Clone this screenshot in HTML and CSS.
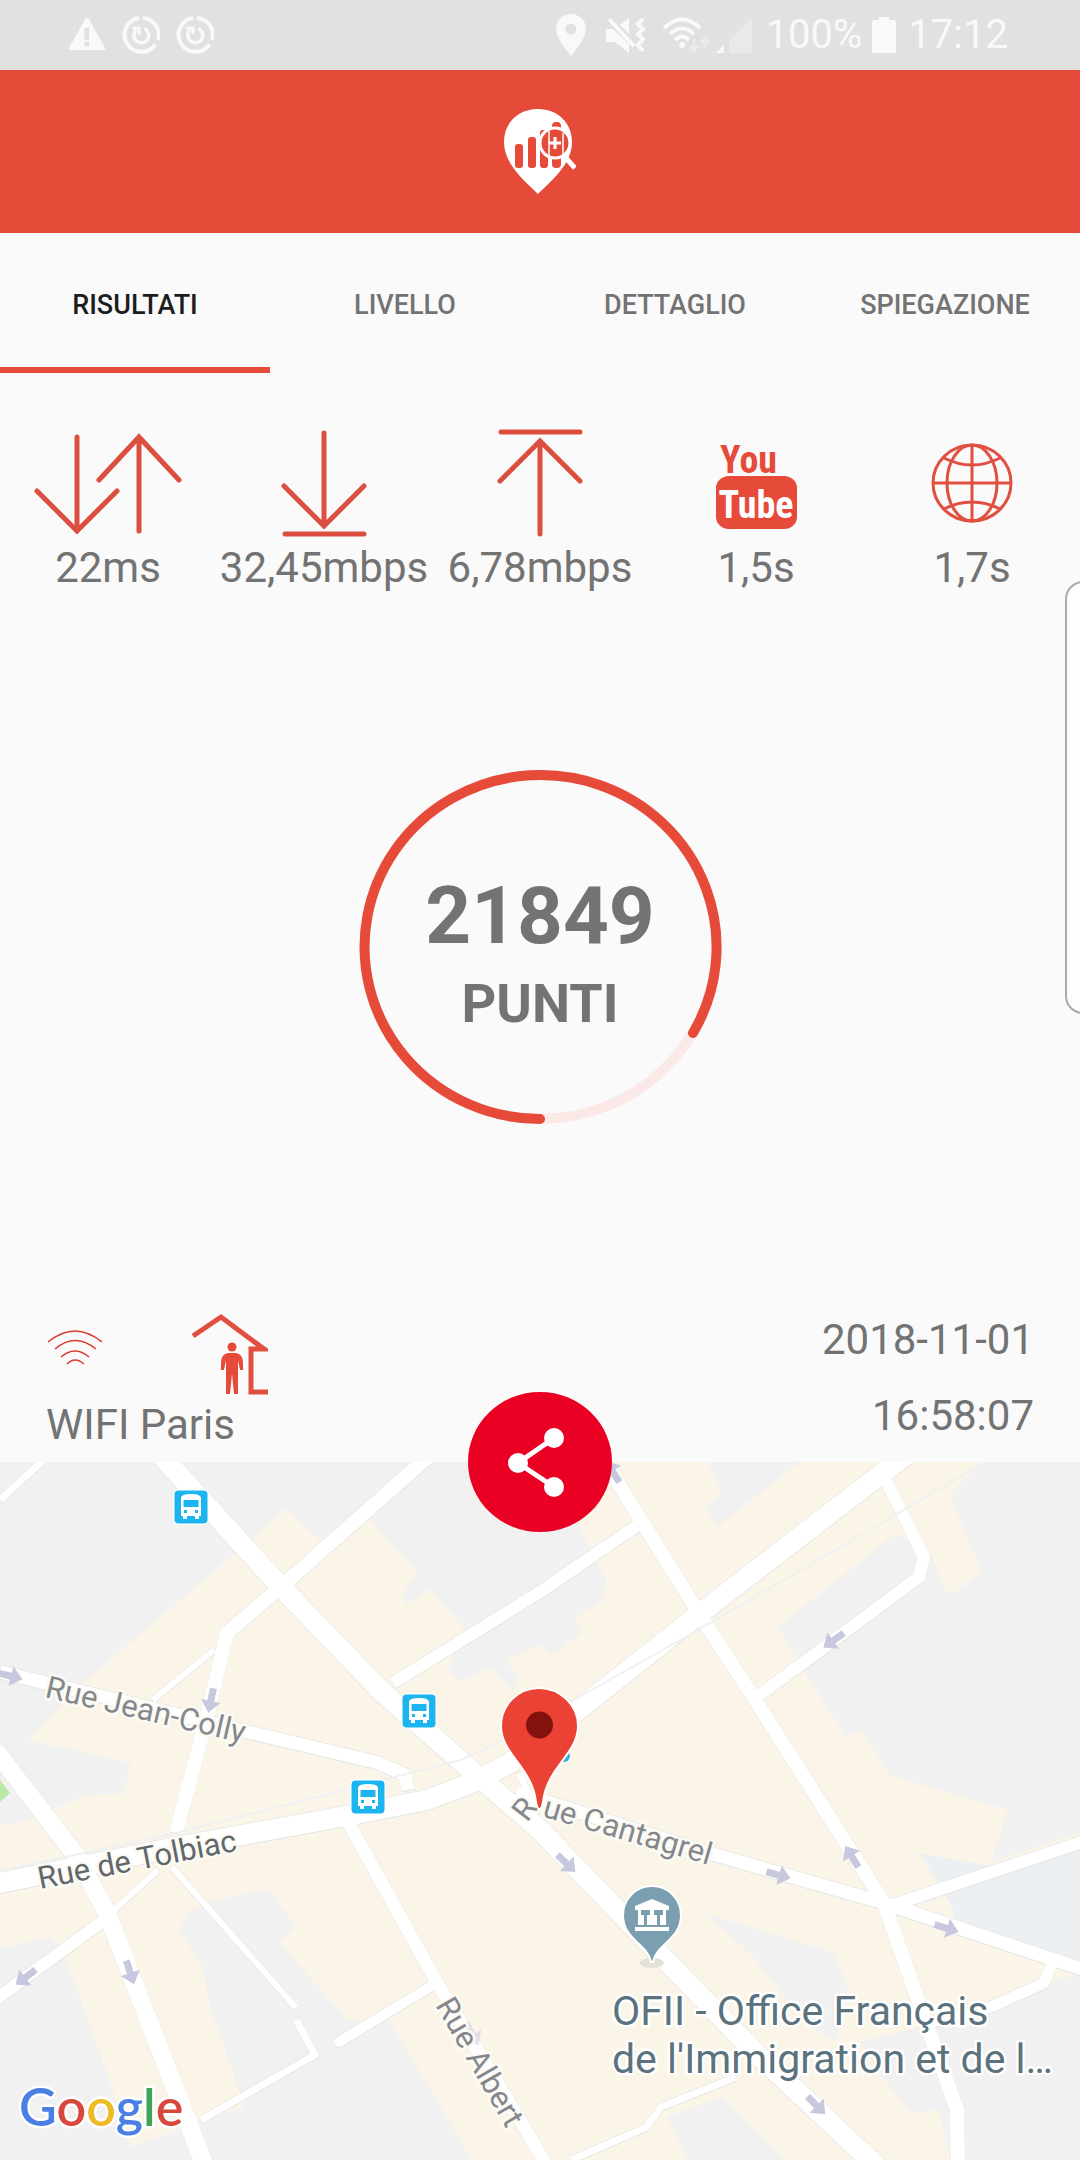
FILE: index.html
```html
<!DOCTYPE html>
<html lang="it">
<head>
<meta charset="utf-8">
<meta name="viewport" content="width=device-width, initial-scale=1">
<title>Risultati</title>
<link rel="stylesheet" href="styles.css">
</head>
<body>
<div class="status">
  <div class="status-group status-left">
    <svg width="38" height="38" viewBox="0 0 38 38"><path fill="#fff" fill-rule="evenodd" d="M19 2q1.500 0 2 1l16 29q.5 2-1 2H2q-1.500 0-1-2L17 3q.5-1 2-1zM16.500 12v12h4.500V12zM16.500 26v4.500h4.500V26z"/></svg>
    <svg width="38" height="38" viewBox="0 0 38 38"><g id="sync" fill="none" stroke="#fff"><path stroke-width="4" d="M17 2A17 17 0 1 0 33.500 28.500M21 2A17 17 0 0 1 36 24"/><path stroke-width="3.500" d="M22.500 12.500A7.500 7.500 0 1 1 14 14"/><path stroke-width="3" d="M10.500 12h6.500v6.500"/></g></svg>
    <svg width="38" height="38" viewBox="0 0 38 38"><use href="#sync"/></svg>
  </div>
  <div class="status-group">
    <svg class="s-pin" width="30" height="42" viewBox="0 0 30 42"><path fill="#fff" fill-rule="evenodd" d="M15 0C6.500 0 0 6.500 0 15c0 10 15 27 15 27s15-17 15-27C30 6.500 23.500 0 15 0zm0 9.500a5.500 5.500 0 1 1 0 11 5.500 5.500 0 0 1 0-11z"/></svg>
    <svg class="s-mute" width="40" height="36" viewBox="0 0 40 36"><path fill="#fff" d="M0 12h7l16 15v9L9 25H0zM14 8l9-7v16z"/><path fill="none" stroke="#fff" stroke-width="4" d="M3 2l25 27M37 2l-5 5 5 5-5 5 5 5-5 6 5 6"/></svg>
    <svg class="s-wifi" width="48" height="36" viewBox="0 0 48 36"><g fill="none" stroke="#fff" stroke-width="4"><path d="M2 11q18-17 36 0M8 17q12-11 24 0M13 23q7-7 14 0"/></g><circle cx="20" cy="28" r="3" fill="#fff"/><path opacity=".45" fill="none" stroke="#fff" stroke-width="3" d="M32 22v12M28 29l4 5 4-5M43 32V21M39 26l4-5 4 5"/></svg>
    <svg class="s-signal" width="36" height="36" viewBox="0 0 36 36"><path fill="#fff" opacity=".35" d="M36 0v36H13V23z"/><path fill="#fff" d="M8 28v8H0z"/></svg>
    <span>100%</span>
    <svg class="s-bat" width="24" height="36" viewBox="0 0 24 36"><path fill="#fff" d="M7 0h10v3h5q2 0 2 2v29q0 2-2 2H2q-2 0-2-2V5q0-2 2-2h5z"/></svg>
    <span>17:12</span>
  </div>
</div>

<header class="appbar">
  <svg width="72" height="86" viewBox="0 0 72 86" role="img" aria-label="Logo">
    <path fill="#fff" d="M34 0C14 0 0 14 0 33c0 22 20 38 34 52C48 71 68 55 68 33 68 14 54 0 34 0z"/>
    <g fill="#e64b3a"><rect x="11" y="35" width="8" height="24" rx="3"/><rect x="24" y="28" width="8" height="31" rx="3"/><rect x="36" y="21" width="8" height="38" rx="3"/><rect x="48" y="13" width="9" height="46" rx="4"/><circle cx="51" cy="34" r="14"/></g>
    <path fill="none" stroke="#fff" stroke-width="1.500" d="M45 22v27M59 24v22"/>
    <circle cx="51" cy="34" r="15" fill="none" stroke="#fff" stroke-width="3"/>
    <path fill="none" stroke="#fff" stroke-width="3" d="M51 28v12M45 34h12"/><path stroke="#fff" stroke-width="5" d="M61 48l10 11"/>
  </svg>
</header>

<nav class="tabs">
  <button class="tab active" type="button">RISULTATI</button>
  <button class="tab" type="button">LIVELLO</button>
  <button class="tab" type="button">DETTAGLIO</button>
  <button class="tab" type="button">SPIEGAZIONE</button>
</nav>

<main>
  <section class="metrics">
    <div class="metric">
      <svg class="line" viewBox="0 0 160 120"><path d="M49 13v94M9 67l40 40 40-40M111 107V13M71 56l40-43 40 43"/></svg>
      <span>22ms</span>
    </div>
    <div class="metric">
      <svg class="line" viewBox="0 0 160 120"><path d="M80 9v93M40 62l40 40 40-40M41 110h79"/></svg>
      <span>32,45mbps</span>
    </div>
    <div class="metric">
      <svg class="line" viewBox="0 0 160 120"><path d="M80 110V17M40 57l40-40 40 40M41 8h79"/></svg>
      <span>6,78mbps</span>
    </div>
    <div class="metric">
      <svg viewBox="0 0 160 120" role="img" aria-label="YouTube"><rect x="40" y="52" width="81" height="53" rx="13" ry="12" fill="#e64b3a"/><text class="yt" x="44" y="49" fill="#e64b3a">You</text><text class="yt" x="80" y="94" fill="#fff" text-anchor="middle">Tube</text></svg>
      <span>1,5s</span>
    </div>
    <div class="metric">
      <svg class="globe" viewBox="0 0 160 120"><ellipse cx="80" cy="59" rx="39" ry="38"/><ellipse cx="80" cy="59" rx="25" ry="38"/><path d="M80 21v76M41 59h78M52 34q28 14 56 0M52 85q28-14 56 0"/></svg>
      <span>1,7s</span>
    </div>
  </section>

  <section class="score">
    <svg class="ring" viewBox="0 0 368 360"><ellipse class="track" cx="184" cy="179" rx="176" ry="172"/><path class="value" d="M184 351A176 172 0 1 1 337 265"/></svg>
    <div class="score-text"><strong class="points">21849</strong><strong class="unit">PUNTI</strong></div>
  </section>

  <section class="info">
    <div class="network">
      <div class="network-icons">
        <svg width="56" height="84" viewBox="0 0 56 84" fill="none" stroke="#d8382e" stroke-width="1.500"><path d="M2 30q27-22 54 0M9 37q20-17 41 0M15 45q14-12 28 0M21 52q8-8 17 0"/></svg>
        <svg width="76" height="84" viewBox="0 0 76 84"><path fill="none" stroke="#e04f3f" stroke-width="5" d="M1 24L29 5 72 37H59v43h17"/><g fill="#e64b3a"><circle cx="40" cy="35" r="4.500"/><path d="M36 41h8q7 1 7 10v7h-3l-2-10v34h-4l-2-20-2 20h-4V48l-2 10h-3v-7q0-9 7-10z"/></g></svg>
      </div>
      <span>WIFI Paris</span>
    </div>
    <div class="when"><time>2018-11-01</time><time>16:58:07</time></div>
  </section>
</main>

<section class="map" aria-label="Mappa">
  <button class="share" type="button" aria-label="Condividi">
    <svg width="64" height="70" viewBox="0 0 64 70"><path fill="none" stroke="#fff" stroke-width="5" d="M46 11L10 36l36 24"/><g fill="#fff"><circle cx="46" cy="11" r="10"/><circle cx="10" cy="36" r="10"/><circle cx="46" cy="60" r="10"/></g></svg>
  </button>
  <svg class="map-canvas" viewBox="0 0 1080 698" preserveAspectRatio="xMidYMin slice">
    <defs>
      <path id="way" d="M-12-3.500H1V-10L13 0 1 10V3.500H-12z"/>
      <g id="bus"><rect x="-18" y="-18" width="36" height="36" rx="6" fill="#fff"/><rect x="-16.500" y="-16.500" width="33" height="33" rx="4" fill="#1cb5ef"/><path fill="#fff" fill-rule="evenodd" d="M-10-9q0-4 10-4t10 4V9H8v3H4V9H-4v3H-8V9h-2zM-7.500-7V0h15v-7zM-7 3v3h3V3zM4 3v3h3V3z"/></g>
      <path id="cantagrel" d="M527 361L534 352 716 405"/>
      <g id="roads">
        <path stroke-width="20" d="M155-14L167 0 281 125 382 230 479 315 540 368 643 475 753 588 885 712"/>
        <path stroke-width="14" d="M438-14L281 125 227 171 207 255 176 371"/>
        <path stroke-width="6" d="M214 188L153 238M158 408L114 448M172 405L296 546"/>
        <path stroke-width="13" d="M0 210L138 243 248 270 379 301 405 313 408 328"/>
        <path stroke-width="20" d="M-5 422L172 386 351 353 427 338 472 321 510 301 578 248 698 153 915-14"/>
        <path stroke-width="18" d="M-5 288L77 395 107 451 208 712"/>
        <path stroke-width="12" d="M107 456L-5 538M393 221L540 130 638 63M757 235L919 115 924 95 884 15M884 446L1085 379"/>
        <path stroke-width="7" d="M296 558L315 593 201 658M736 615L661 645 647 665 571 698M50-8L0 38M520 311L530 338"/>
        <path stroke-width="13" d="M348 360L437 521 548 705M516 331L550 341 709 391 884 441 1085 508"/>
        <path stroke-width="10" stroke-linecap="round" d="M430 525L339 580"/>
        <path stroke-width="14" d="M600-8L698 150 750 230 884 441 926 561 957 648 958 712"/>
        <path stroke-width="11" d="M1053 500L1044 521 991 545 925 562"/>
      </g>
    </defs>
    <rect width="1080" height="698" fill="#fbf5e8"/>
    <g fill="#f1f1f1">
      <path d="M0 0H560L581 68 598 105 607 118 602 138 576 156 581 171 554 193 540 183 506 198 518 216 513 228 489 206 461 220 448 208 465 168 430 126 406 143 403 131 418 111 370 58 319 78 285 46 253 76 83 221 28 278 131 301 124 331 86 333 62 343 24 360 0 363z"/>
      <path d="M707 0L722 30 705 45 717 65 800 0z"/>
      <path d="M896 71L778 165 805 211 846 275 862 268 889 313 1008 348 991 400 1080 370V0H982L951 31 953 41 982 111 953 131 946 130 933 95z"/>
      <path d="M705 451L834 491 848 528 836 578 815 568 781 531 753 495zM860 580L991 548 1050 520 1080 512V698H950L939 648 912 651 884 618z"/>
      <path d="M667 655L722 635 784 698H688zM189 451L213 438 270 428 296 465 279 480 348 558 389 558 472 698H120L131 685 244 645 238 625 210 545 203 505 179 468zM0 486L52 475 65 495 107 611 131 685 120 698H0z"/>
    </g>
    <path fill="#edf0f2" d="M919 391L991 404 1080 375V510L960 470 950 441z"/>
    <path fill="#b9e8a4" d="M0 318L10 331 0 340z"/>
    <g fill="none" stroke-linejoin="round">
      <use href="#roads" stroke="#e3e4e4" transform="translate(0 1)"/>
      <use href="#roads" stroke="#e9e9e8" transform="translate(0 -1)"/>
      <use href="#roads" stroke="#fff"/>
      <path stroke="#eff0f2" stroke-width="2" d="M982 1L875 65 698 168 597 225 503 278 461 298 344 328 172 372 0 409"/>
    </g>
    <g fill="#c7c8dd">
      <use href="#way" transform="translate(10 214) rotate(14)"/>
      <use href="#way" transform="translate(211 238) rotate(102)"/>
      <use href="#way" transform="translate(26 515) rotate(143)"/>
      <use href="#way" transform="translate(130 510) rotate(72)"/>
      <use href="#way" transform="translate(834 178) rotate(145)"/>
      <use href="#way" transform="translate(613 10) rotate(238)"/>
      <use href="#way" transform="translate(566 401) rotate(44)"/>
      <use href="#way" transform="translate(778 413) rotate(16)"/>
      <use href="#way" transform="translate(852 395) rotate(238)"/>
      <use href="#way" transform="translate(946 466) rotate(17)"/>
      <use href="#way" transform="translate(816 643) rotate(45)"/>
      <use href="#way" transform="translate(472 572) rotate(60)" opacity=".5"/>
    </g>
    <use href="#bus" transform="translate(191 45)"/>
    <use href="#bus" transform="translate(419 249)"/>
    <use href="#bus" transform="translate(368 335)"/>
    <g class="street">
      <text transform="translate(44 235) rotate(13)">Rue Jean-Colly</text>
      <text class="major" transform="translate(40 427) rotate(-11)">Rue de Tolbiac</text>
      <text><textPath href="#cantagrel">Rue Cantagrel</textPath></text>
      <text transform="translate(435 543) rotate(60)">Rue Albert</text>
    </g>
    <circle cx="564" cy="294" r="6" fill="#2fb2e0"/>
    <path fill="#ea4335" stroke="#fff" stroke-width="2" d="M539 226C518 226 501 243 501 264 501 292 532 305 536 340Q537 347 539.500 347T543 340C547 305 578 292 578 264 578 243 560 226 539 226z"/>
    <circle cx="539.500" cy="263" r="13.500" fill="#83120f"/>
    <ellipse cx="652" cy="501" rx="12" ry="5" fill="#e4e1da"/>
    <path fill="#7b9eb0" stroke="#fff" stroke-width="2" d="M652 424A29 29 0 0 0 623 453C623 478 648 482 651 500H653C656 482 681 478 681 453A29 29 0 0 0 652 424z"/>
    <path fill="#fff" fill-rule="evenodd" d="M635 444L652 437 669 444V448H666V463H638V448H635zM641 448V453H644V463H647V453H650V448zM654 448V453H657V463H660V453H663V448zM635 465H669V469H635z"/>
    <g class="place"><text x="612" y="563">OFII - Office Français</text><text x="612" y="611">de l'Immigration et de l…</text></g>
    <text class="google" x="19" y="664"><tspan fill="#4a80e4">G</tspan><tspan fill="#d8483c">o</tspan><tspan fill="#f0ba25">o</tspan><tspan fill="#4a80e4">g</tspan><tspan fill="#42a257">l</tspan><tspan fill="#d8483c">e</tspan></text>
  </svg>
</section>
<div class="edge-handle"></div>
</body>
</html>
```
FILE: styles.css
```css
* { box-sizing: border-box; }

body {
  position: relative;
  display: flex;
  flex-direction: column;
  min-height: 100vh;
  margin: 0;
  overflow-x: hidden;
  background: #fafafa;
  color: #737373;
  font-family: Roboto, "Liberation Sans", sans-serif;
  font-size: 42px;
  line-height: 48px;
}

svg { display: block; }
button { border: 0; padding: 0; font-family: inherit; }

.status {
  display: flex;
  justify-content: space-between;
  align-items: center;
  padding: 11px 72px 11px 68px;
  background: #e1e1e1;
  color: #f9f9f9;
  font-size: 40px;
}
.status svg { opacity: .8; }
.status-group { display: flex; align-items: center; }
.status-left { gap: 16px; }
.s-pin { margin-right: 20px; }
.s-mute { margin-right: 16px; }
.s-wifi { margin-right: 6px; }
.s-signal { margin-right: 14px; }
.s-bat { margin: 0 12px 0 10px; }

.appbar {
  display: flex;
  justify-content: center;
  padding: 39px 0 38px;
  background: #e64b3a;
}

.tabs { display: grid; grid-template-columns: repeat(4, 1fr); }
.tab {
  padding: 48px 0 38px;
  border-bottom: 6px solid transparent;
  background: none;
  color: #737373;
  font-size: 27px;
  font-weight: 500;
  line-height: 48px;
}
.tab.active { border-color: #e64b3a; color: #1d1d1d; }

.metrics {
  display: grid;
  grid-template-columns: repeat(5, 1fr);
  padding-top: 51px;
}
.metric {
  display: flex;
  flex-direction: column;
  align-items: center;
  white-space: nowrap;
}
.metric svg { width: 160px; height: 120px; }
.line {
  fill: none;
  stroke: #dc4e40;
  stroke-width: 5;
  stroke-linecap: round;
}
.globe { fill: none; stroke: #e04f3f; stroke-width: 3; }
.yt { font: bold 38px "Liberation Sans Narrow", "Roboto Condensed", "Liberation Sans", sans-serif; }

.score {
  display: grid;
  justify-items: center;
  align-items: center;
  padding-top: 176px;
}
.ring, .score-text { grid-area: 1 / 1; }
.ring { width: 368px; height: 360px; fill: none; stroke-width: 10; }
.track { stroke: #fae9e7; }
.value { stroke: #e64b3a; stroke-linecap: round; }
.score-text {
  display: flex;
  flex-direction: column;
  align-items: center;
  padding-top: 16px;
}
.points { font-size: 80px; line-height: 96px; }
.unit { font-size: 54px; line-height: 80px; }

.info {
  display: flex;
  justify-content: space-between;
  padding: 172px 46px 8px;
}
.network { padding-top: 12px; }
.network-icons { display: flex; gap: 90px; margin-bottom: 5px; }
.when {
  display: flex;
  flex-direction: column;
  align-items: flex-end;
  padding-top: 2px;
  line-height: 76px;
}

.map {
  position: relative;
  display: flex;
  flex: 1;
  min-height: 400px;
}
.map-canvas { flex: 1; width: 100%; min-width: 0; }
.share {
  position: absolute;
  top: 0;
  left: 50%;
  display: grid;
  place-items: center;
  width: 144px;
  height: 140px;
  border-radius: 50%;
  background: #ea0022;
  transform: translate(-50%, -50%);
}

.street, .place, .google {
  stroke: #fff;
  stroke-width: 5;
  stroke-linejoin: round;
  paint-order: stroke;
}
.street { fill: #84888c; font-size: 31px; stroke: #fcfaf4; }
.major { fill: #62676c; }
.place { fill: #5c737d; font-size: 41px; }
.google { font: 600 52px Lato, sans-serif; }

.edge-handle {
  position: absolute;
  top: 581px;
  right: -30px;
  width: 45px;
  height: 433px;
  border: 2px solid #aaa;
  border-radius: 18px;
  background: #fdfdfd;
}
```
